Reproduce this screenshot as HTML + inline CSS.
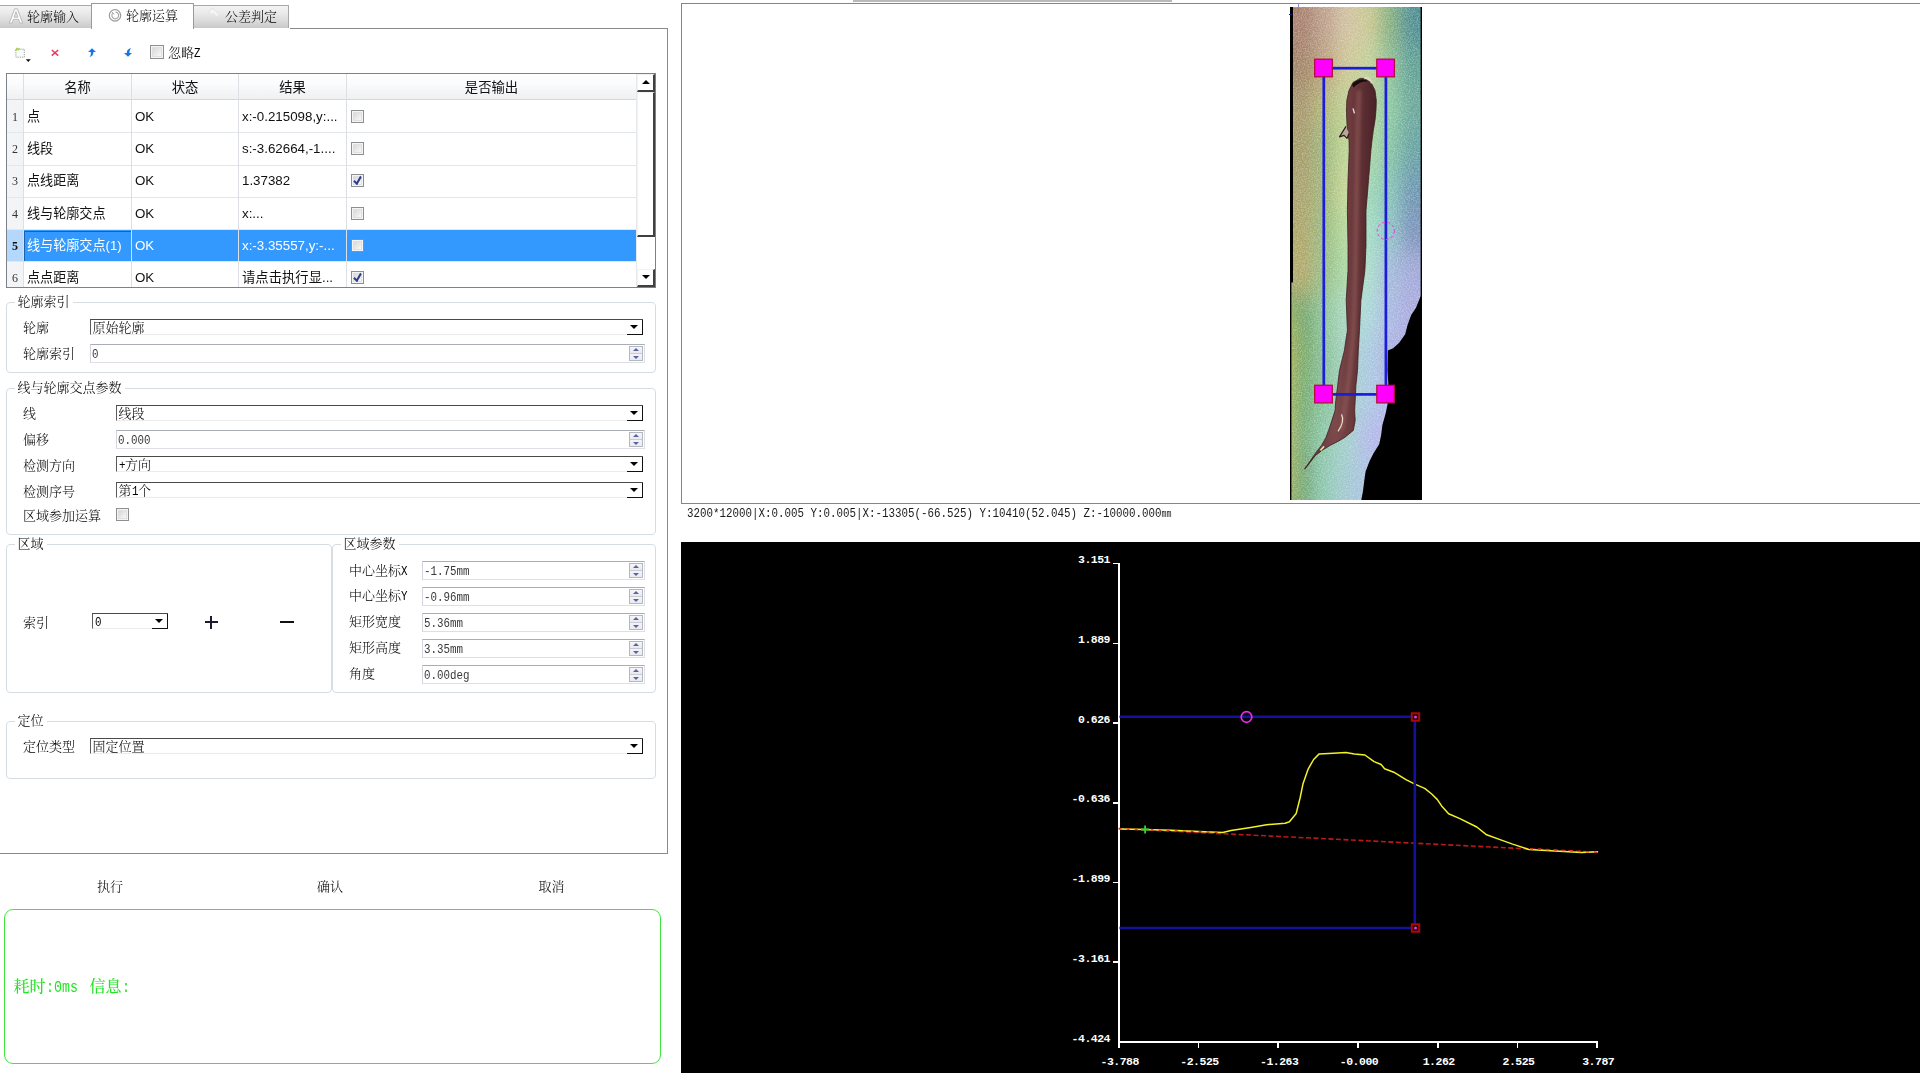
<!DOCTYPE html>
<html lang="zh-CN">
<head>
<meta charset="utf-8">
<title>轮廓运算</title>
<style>
html,body{margin:0;padding:0;}
body{width:1920px;height:1080px;overflow:hidden;background:#fff;position:relative;
 font-family:"Liberation Sans","Noto Sans CJK SC",sans-serif;font-size:13px;color:#000;}
.abs{position:absolute;}
.t{position:absolute;white-space:nowrap;line-height:16px;height:16px;font-size:13px;margin-left:-1px;
 font-family:"Liberation Serif","Noto Serif CJK SC",serif;color:#000;font-weight:300;}
.y{position:absolute;white-space:nowrap;line-height:16px;height:16px;font-size:13.33px;margin-top:1px;
 font-family:"Liberation Sans","Noto Sans CJK SC",sans-serif;color:#111;}
.num{font-family:"Liberation Sans","Noto Sans CJK SC",sans-serif;font-size:12px;color:#333;}
.h{display:inline-block;width:6.5px;font-family:"Liberation Mono",monospace;font-size:13px;transform:scaleX(0.8333);transform-origin:0 50%;}
/* tabs */
.tab{position:absolute;box-sizing:border-box;border:1px solid #a9a9a9;border-bottom:none;
 background:linear-gradient(#f3f3f3 0%,#ebebeb 30%,#dcdcdc 65%,#c9c9c9 100%);border-color:#a8a8a8;}
.tab.act{background:#fff;border-color:#9a9a9a;}
/* groupbox */
.gb{position:absolute;box-sizing:border-box;border:1px solid #d5dde3;border-radius:4px;}
.gbt{position:absolute;background:#fff;padding:0 3px;white-space:nowrap;line-height:16px;height:16px;font-size:13px;
 font-family:"Liberation Serif","Noto Serif CJK SC",serif;color:#000;font-weight:300;}
/* combobox */
.cb{position:absolute;box-sizing:border-box;height:16px;margin-right:1px;background:#fff;
 border-top:1.5px solid #4a4a4a;border-left:1.5px solid #5a5a5a;border-right:0;border-bottom:1px solid #ececec;}
.cb .btn{position:absolute;right:0;top:0;bottom:-1px;width:16.5px;box-sizing:border-box;background:#fff;
 border-right:1.5px solid #111;border-bottom:1.5px solid #111;border-top:0;border-left:0;}
.cb .btn:after{content:"";position:absolute;left:3.6px;top:5.3px;width:0;height:0;border-left:4.2px solid transparent;border-right:4.2px solid transparent;border-top:4.4px solid #000;}
.cb>span{position:absolute;left:1.5px;top:-0.5px;line-height:16px;font-size:13px;white-space:nowrap;
 font-family:"Liberation Serif","Noto Serif CJK SC",serif;color:#000;font-weight:300;}
/* spinbox */
.sp{position:absolute;box-sizing:border-box;height:19px;background:#fff;
 border:1px solid #dcdfe6;border-top-color:#a9adb6;border-left-color:#d2d5dc;}
.sp>span{position:absolute;left:0.5px;top:2px;line-height:16px;white-space:nowrap;transform:scaleX(0.8333);transform-origin:0 0;
 font-family:"Liberation Mono","Noto Sans CJK SC",monospace;font-size:13px;color:#3a3a3a;}
.sp .ud{position:absolute;right:1px;top:1px;width:14px;height:15px;box-sizing:border-box;border:1px solid #b4b8c0;
 background:linear-gradient(#f6f6f8,#e8e9ee 48%,#c9ccd6 50%,#f4f4f8 54%,#e9eaf0);}
.sp .ud:before{content:"";position:absolute;left:3px;top:1px;border:3px solid transparent;border-bottom:3px solid #5a62a0;border-top:0;}
.sp .ud:after{content:"";position:absolute;left:3px;top:9px;border:3px solid transparent;border-top:3px solid #5a62a0;border-bottom:0;}
/* checkbox */
.ck{position:absolute;box-sizing:border-box;width:13px;height:13px;border:1px solid #8e8f8f;background:#f4f4f4;}
.ck:before{content:"";position:absolute;left:1px;top:1px;right:1px;bottom:1px;border:1px solid #e0e0e0;
 background:linear-gradient(135deg,#d8d8d8,#f8f8f8);}
.ck.on:after{content:"";position:absolute;left:3px;top:0px;width:3px;height:7px;border-right:2px solid #2a3a8c;border-bottom:2px solid #2a3a8c;transform:rotate(40deg) skewX(10deg);}
/* table */
.hl{position:absolute;background:#e3e6ea;height:1px;}
.vl{position:absolute;background:#dcdfe4;width:1px;}
</style>
</head>
<body>
<!-- LEFT PANEL -->
<div id="left" style="will-change:transform">
<!-- panel frame -->
<div class="abs" style="left:290px;top:28px;width:378px;height:1px;background:#8a8a8a"></div>
<div class="abs" style="left:667px;top:28px;width:1px;height:826px;background:#8a8a8a"></div>
<div class="abs" style="left:0;top:853px;width:668px;height:1px;background:#8a8a8a"></div>
<!-- tabs -->
<div class="tab" style="left:-1px;top:5px;width:93px;height:23px"></div>
<div class="tab" style="left:193px;top:5px;width:96px;height:23px"></div>
<div class="tab act" style="left:91px;top:3px;width:103px;height:26px"></div>
<div class="t" style="left:28px;top:9px;">轮廓输入</div>
<div class="t" style="left:127px;top:8px;">轮廓运算</div>
<div class="t" style="left:226px;top:9px;">公差判定</div>
<svg class="abs" style="left:8px;top:7px" width="16" height="18" viewBox="0 0 16 18"><path d="M1.3 16.2 L6.6 1.8 L9.4 1.8 L14.7 16.2 L12 16.2 L10.7 12.4 L5.3 12.4 L4 16.2 Z M6.1 10.2 L9.9 10.2 L8 4.6 Z" fill="#fdfdfd" stroke="#b4b4b4" stroke-width="0.9" stroke-linejoin="round"/></svg>
<svg class="abs" style="left:108px;top:8px" width="15" height="15" viewBox="0 0 15 15"><circle cx="7" cy="7.4" r="5.7" fill="none" stroke="#9c9c9c" stroke-width="1.2"/><path d="M4.6 5.4 A3.4 3.4 0 1 0 7.6 4.1" fill="none" stroke="#a4a4a4" stroke-width="1.1"/><path d="M3.6 3.8 L6.3 6.2" stroke="#a4a4a4" stroke-width="1" fill="none"/></svg>
<svg class="abs" style="left:207px;top:7px" width="14" height="12" viewBox="0 0 14 12"><path d="M1.5 4.5 L6 1 L12 7.5 L9.5 10 L6.5 6.5 L4.5 8 Z" fill="#f4f4f4" stroke="#e2e2e2" stroke-width="1" stroke-linejoin="round"/></svg>
<!-- toolbar -->
<svg class="abs" style="left:13px;top:46px" width="20" height="18" viewBox="0 0 20 18">
 <rect x="2.9" y="3.2" width="8.4" height="8" fill="#fbfbfb" stroke="#9c9c9c" stroke-width="1" stroke-dasharray="1.2 1"/>
 <path d="M2.2 4.8 L4 2.3 L5.2 4 L6.6 2.2" fill="none" stroke="#a6d23a" stroke-width="1.3"/>
 <path d="M12.8 13.3 L17.8 13.3 L15.3 15.9 Z" fill="#111"/>
</svg>
<svg class="abs" style="left:50px;top:48px" width="10" height="10" viewBox="0 0 10 10"><path d="M1.8 2 L8.2 7.6 M8.2 2 L1.8 7.6" stroke="#e8395f" stroke-width="1.5" fill="none"/></svg>
<svg class="abs" style="left:87px;top:47px" width="10" height="11" viewBox="0 0 10 11"><path d="M1 5 L5 1.2 L9 5 L6.4 5 C6.4 7.6 5.4 9.3 2.6 9.9 C4 8.6 3.9 7 3.8 5 Z" fill="#1877e6"/></svg>
<svg class="abs" style="left:123px;top:47px" width="10" height="11" viewBox="0 0 10 11"><path d="M1 6 L5 9.8 L9 6 L6.4 6 C6.5 4 6.9 2.4 8.4 1.1 C5 1.7 3.7 3.6 3.8 6 Z" fill="#1877e6"/></svg>
<div class="ck" style="left:150px;top:45px;width:14px;height:14px"></div>
<div class="t" style="left:169px;top:45px;">忽略<span class="h">Z</span></div>
<!-- table -->
<div class="abs" id="tbl" style="left:6px;top:73px;width:650px;height:215px;box-sizing:border-box;border:1px solid #7d8289;background:#fff;overflow:hidden">
<div class="abs" style="left:0;top:0;width:629px;height:25px;background:linear-gradient(#ffffff 0%,#fafbfc 40%,#eef0f2 100%)"></div>
<div class="abs" style="left:0;top:25px;width:629px;height:1px;background:#d4d8dd"></div>
<div class="abs" style="left:0;top:26px;width:16px;height:190px;background:#f3f4f6"></div>
<div class="abs" style="left:16px;top:155.5px;width:613px;height:32px;background:#3399ff"></div>
<div class="abs" style="left:0;top:155.5px;width:16px;height:32px;background:#b4d8fb"></div>
<div class="abs" style="left:17px;top:156.5px;width:106px;height:29px;border:1px solid #1f5fae;box-sizing:content-box"></div>
<div class="hl" style="left:0;top:58.30000000000001px;width:629px"></div>
<div class="hl" style="left:0;top:90.5px;width:629px"></div>
<div class="hl" style="left:0;top:122.80000000000001px;width:629px"></div>
<div class="hl" style="left:0;top:155px;width:629px"></div>
<div class="hl" style="left:0;top:187px;width:629px"></div>
<div class="vl" style="left:16px;top:0;height:215px"></div>
<div class="vl" style="left:124px;top:0;height:215px"></div>
<div class="vl" style="left:231px;top:0;height:215px"></div>
<div class="vl" style="left:339px;top:0;height:215px"></div>
<div class="vl" style="left:629px;top:0;height:215px;background:#e6e8ec"></div>
<div class="y" style="left:20.5px;width:100px;text-align:center;top:5px">名称</div>
<div class="y" style="left:128px;width:100px;text-align:center;top:5px">状态</div>
<div class="y" style="left:235.5px;width:100px;text-align:center;top:5px">结果</div>
<div class="y" style="left:434.5px;width:100px;text-align:center;top:5px">是否输出</div>
<div class="abs" style="left:0;width:16px;text-align:center;top:35.0px;line-height:16px;font-size:12px;font-family:'Liberation Serif',serif;color:#333;">1</div>
<div class="y" style="left:20px;top:34.0px;color:#111;font-size:13.1px">点</div>
<div class="y" style="left:128px;top:34.0px;color:#111">OK</div>
<div class="y" style="left:235px;top:34.0px;color:#111;">x:-0.215098,y:...</div>
<div class="ck" style="left:343.5px;top:36.0px"></div>
<div class="abs" style="left:0;width:16px;text-align:center;top:67.0px;line-height:16px;font-size:12px;font-family:'Liberation Serif',serif;color:#333;">2</div>
<div class="y" style="left:20px;top:66.0px;color:#111;font-size:13.1px">线段</div>
<div class="y" style="left:128px;top:66.0px;color:#111">OK</div>
<div class="y" style="left:235px;top:66.0px;color:#111;">s:-3.62664,-1....</div>
<div class="ck" style="left:343.5px;top:68.0px"></div>
<div class="abs" style="left:0;width:16px;text-align:center;top:99.0px;line-height:16px;font-size:12px;font-family:'Liberation Serif',serif;color:#333;">3</div>
<div class="y" style="left:20px;top:98.0px;color:#111;font-size:13.1px">点线距离</div>
<div class="y" style="left:128px;top:98.0px;color:#111">OK</div>
<div class="y" style="left:235px;top:98.0px;color:#111;">1.37382</div>
<div class="ck on" style="left:343.5px;top:100.0px"></div>
<div class="abs" style="left:0;width:16px;text-align:center;top:131.5px;line-height:16px;font-size:12px;font-family:'Liberation Serif',serif;color:#333;">4</div>
<div class="y" style="left:20px;top:130.5px;color:#111;font-size:13.1px">线与轮廓交点</div>
<div class="y" style="left:128px;top:130.5px;color:#111">OK</div>
<div class="y" style="left:235px;top:130.5px;color:#111;">x:...</div>
<div class="ck" style="left:343.5px;top:132.5px"></div>
<div class="abs" style="left:0;width:16px;text-align:center;top:163.5px;line-height:16px;font-size:12px;font-family:'Liberation Serif',serif;font-weight:bold;color:#111;">5</div>
<div class="y" style="left:20px;top:162.5px;color:#fff;font-size:13.1px">线与轮廓交点(1)</div>
<div class="y" style="left:128px;top:162.5px;color:#fff">OK</div>
<div class="y" style="left:235px;top:162.5px;color:#fff;">x:-3.35557,y:-...</div>
<div class="ck" style="left:343.5px;top:164.5px"></div>
<div class="abs" style="left:0;width:16px;text-align:center;top:196.0px;line-height:16px;font-size:12px;font-family:'Liberation Serif',serif;color:#333;">6</div>
<div class="y" style="left:20px;top:195.0px;color:#111;font-size:13.1px">点点距离</div>
<div class="y" style="left:128px;top:195.0px;color:#111">OK</div>
<div class="y" style="left:235px;top:195.0px;color:#111;">请点击执行显...</div>
<div class="ck on" style="left:343.5px;top:197.0px"></div>
<div class="abs" style="left:630px;top:0;width:18px;height:213px;background:#fff"></div>
<div class="abs" style="left:630px;top:0px;width:18px;height:18px;box-sizing:border-box;background:#fff;border-right:2px solid #404040;border-bottom:2px solid #404040;border-left:1px solid #f2f2f2;border-top:1px solid #f2f2f2"></div>
<div class="abs" style="left:630px;top:18px;width:18px;height:145px;box-sizing:border-box;background:#fff;border-right:2px solid #404040;border-bottom:2px solid #404040;border-left:1px solid #f2f2f2;border-top:1px solid #f2f2f2"></div>
<div class="abs" style="left:630px;top:195px;width:18px;height:18px;box-sizing:border-box;background:#fff;border-right:2px solid #404040;border-bottom:2px solid #404040;border-left:1px solid #f2f2f2;border-top:1px solid #f2f2f2"></div>
<div class="abs" style="left:635px;top:6px;width:0;height:0;border-left:4px solid transparent;border-right:4px solid transparent;border-bottom:4.3px solid #000"></div>
<div class="abs" style="left:635px;top:201px;width:0;height:0;border-left:4px solid transparent;border-right:4px solid transparent;border-top:4.3px solid #000"></div>
</div>
<!-- group: 轮廓索引 -->
<div class="gb" style="left:6px;top:302px;width:650px;height:71px"></div>
<div class="gbt" style="left:14.5px;top:294px">轮廓索引</div>
<div class="t" style="left:24px;top:320px">轮廓</div>
<div class="cb" style="left:90px;top:319px;width:553px"><span>原始轮廓</span><div class="btn"></div></div>
<div class="t" style="left:24px;top:345.5px">轮廓索引</div>
<div class="sp" style="left:90px;top:344px;width:555px"><span>0</span><div class="ud"></div></div>
<!-- group: 线与轮廓交点参数 -->
<div class="gb" style="left:6px;top:388px;width:650px;height:147px"></div>
<div class="gbt" style="left:14.5px;top:380px">线与轮廓交点参数</div>
<div class="t" style="left:24px;top:405.7px">线</div>
<div class="cb" style="left:116px;top:405px;width:527px"><span>线段</span><div class="btn"></div></div>
<div class="t" style="left:24px;top:431.5px">偏移</div>
<div class="sp" style="left:116px;top:430px;width:529px"><span>0.000</span><div class="ud"></div></div>
<div class="t" style="left:24px;top:457.5px">检测方向</div>
<div class="cb" style="left:116px;top:456px;width:527px"><span><span class="h">+</span>方向</span><div class="btn"></div></div>
<div class="t" style="left:24px;top:483.5px">检测序号</div>
<div class="cb" style="left:116px;top:482px;width:527px"><span>第<span class="h">1</span>个</span><div class="btn"></div></div>
<div class="t" style="left:24px;top:507.5px">区域参加运算</div>
<div class="ck" style="left:116px;top:507.5px"></div>
<!-- group: 区域 -->
<div class="gb" style="left:6px;top:544px;width:326px;height:149px"></div>
<div class="gbt" style="left:14.5px;top:536px">区域</div>
<div class="t" style="left:24px;top:614.5px">索引</div>
<div class="cb" style="left:92px;top:613px;width:76px"><span><span class="h">0</span></span><div class="btn"></div></div>
<div class="abs" style="left:205px;top:621.3px;width:13px;height:1.8px;background:#1a1a30"></div><div class="abs" style="left:210.4px;top:615.8px;width:1.8px;height:12.8px;background:#1a1a30"></div>
<div class="abs" style="left:279.5px;top:621.2px;width:14px;height:1.8px;background:#111"></div>
<!-- group: 区域参数 -->
<div class="gb" style="left:332px;top:544px;width:324px;height:149px"></div>
<div class="gbt" style="left:340.5px;top:536px">区域参数</div>
<div class="t" style="left:350px;top:562.6px">中心坐标<span class="h">X</span></div>
<div class="sp" style="left:422px;top:561px;width:223px"><span>-1.75mm</span><div class="ud"></div></div>
<div class="t" style="left:350px;top:588.3px">中心坐标<span class="h">Y</span></div>
<div class="sp" style="left:422px;top:587px;width:223px"><span>-0.96mm</span><div class="ud"></div></div>
<div class="t" style="left:350px;top:614px">矩形宽度</div>
<div class="sp" style="left:422px;top:612.5px;width:223px"><span>5.36mm</span><div class="ud"></div></div>
<div class="t" style="left:350px;top:640px">矩形高度</div>
<div class="sp" style="left:422px;top:638.5px;width:223px"><span>3.35mm</span><div class="ud"></div></div>
<div class="t" style="left:350px;top:665.8px">角度</div>
<div class="sp" style="left:422px;top:664.5px;width:223px"><span>0.00deg</span><div class="ud"></div></div>
<!-- group: 定位 -->
<div class="gb" style="left:6px;top:720.5px;width:650px;height:58.5px"></div>
<div class="gbt" style="left:14.5px;top:712.5px">定位</div>
<div class="t" style="left:24px;top:738.8px">定位类型</div>
<div class="cb" style="left:90px;top:738px;width:553px"><span>固定位置</span><div class="btn"></div></div>
<!-- buttons -->
<div class="t" style="left:71px;width:80px;text-align:center;top:878.8px">执行</div>
<div class="t" style="left:291px;width:80px;text-align:center;top:878.8px">确认</div>
<div class="t" style="left:512.5px;width:80px;text-align:center;top:878.8px">取消</div>
<!-- message box -->
<div class="abs" style="left:4px;top:909px;width:657px;height:155px;box-sizing:border-box;border:1.5px solid #3fe63f;border-radius:9px"></div>
<div class="abs" id="msg" style="left:13.5px;top:977.5px;line-height:20px;font-size:16px;color:#24e424;white-space:pre;font-family:'Liberation Mono','Noto Serif CJK SC',monospace;font-weight:500">耗时<span style="display:inline-block;width:32px;font-size:16px;transform:scaleX(0.8333);transform-origin:0 50%">:0ms</span></div><div class="abs" id="msg2" style="left:89.5px;top:977.5px;line-height:20px;font-size:16px;color:#24e424;white-space:pre;font-family:'Liberation Mono','Noto Serif CJK SC',monospace;font-weight:500">信息<span style="display:inline-block;width:8px;font-size:16px;transform:scaleX(0.8333);transform-origin:0 50%">:</span></div>
</div>
<!-- RIGHT: viewer frame -->
<div class="abs" style="left:853px;top:0;width:319px;height:2px;background:#b9b9b9;filter:blur(0.6px)"></div>
<div class="abs" id="viewer" style="left:681px;top:3px;width:1245px;height:501px;box-sizing:border-box;border:1px solid #858585;background:#fff"></div>
<!--IMG-->
<svg class="abs" id="scan" style="left:1290px;top:6.6px" width="132" height="493.4" viewBox="1290 6.6 132 493.4">
<defs>
<filter id="bl" x="-20%" y="-10%" width="140%" height="120%"><feGaussianBlur stdDeviation="7.5 14"/></filter>
<filter id="bl3" x="-50%" y="-10%" width="200%" height="120%"><feGaussianBlur stdDeviation="1.5"/></filter>
<filter id="bl2" x="-30%" y="-30%" width="160%" height="160%"><feGaussianBlur stdDeviation="0.7"/></filter>
<filter id="noise" x="0" y="0" width="100%" height="100%"><feTurbulence type="fractalNoise" baseFrequency="0.75" numOctaves="2" seed="3" result="n"/><feColorMatrix type="matrix" values="0 0 0 0 1  0 0 0 0 1  0 0 0 0 1  1.6 0 0 0 -0.55"/></filter>
<clipPath id="cp"><rect x="1290" y="6.6" width="132" height="493.4"/></clipPath>
<linearGradient id="brn" x1="0" x2="1" y1="0" y2="0"><stop offset="0" stop-color="#4e262c"/><stop offset="0.18" stop-color="#6a3a3e"/><stop offset="0.42" stop-color="#7c4a4c"/><stop offset="0.7" stop-color="#683639"/><stop offset="1" stop-color="#4a2228"/></linearGradient>
</defs>
<g clip-path="url(#cp)">
<rect x="1290" y="6.6" width="132" height="493.4" fill="#9cc0a0"/>
<g filter="url(#bl)">
<rect x="1262.8" y="-34.1" width="52.5" height="82.2" fill="#a67e6c"/>
<rect x="1313.8" y="-34.1" width="22.5" height="82.2" fill="#bc9e88"/>
<rect x="1335.8" y="-34.1" width="22.5" height="82.2" fill="#d0c0a0"/>
<rect x="1356.8" y="-34.1" width="22.5" height="82.2" fill="#c8c690"/>
<rect x="1378.8" y="-34.1" width="22.5" height="82.2" fill="#84b07c"/>
<rect x="1399.8" y="-34.1" width="52.5" height="82.2" fill="#4c8c90"/>
<rect x="1262.8" y="46.9" width="52.5" height="42.2" fill="#a08264"/>
<rect x="1313.8" y="46.9" width="22.5" height="42.2" fill="#b8a07c"/>
<rect x="1335.8" y="46.9" width="22.5" height="42.2" fill="#ccc490"/>
<rect x="1356.8" y="46.9" width="22.5" height="42.2" fill="#c0d098"/>
<rect x="1378.8" y="46.9" width="22.5" height="42.2" fill="#8cc094"/>
<rect x="1399.8" y="46.9" width="52.5" height="42.2" fill="#5ea094"/>
<rect x="1262.8" y="87.9" width="52.5" height="42.2" fill="#a6966a"/>
<rect x="1313.8" y="87.9" width="22.5" height="42.2" fill="#b0b674"/>
<rect x="1335.8" y="87.9" width="22.5" height="42.2" fill="#bcd090"/>
<rect x="1356.8" y="87.9" width="22.5" height="42.2" fill="#b0d09a"/>
<rect x="1378.8" y="87.9" width="22.5" height="42.2" fill="#8ccaa0"/>
<rect x="1399.8" y="87.9" width="52.5" height="42.2" fill="#68a698"/>
<rect x="1262.8" y="128.9" width="52.5" height="42.2" fill="#a49a68"/>
<rect x="1313.8" y="128.9" width="22.5" height="42.2" fill="#98b678"/>
<rect x="1335.8" y="128.9" width="22.5" height="42.2" fill="#bcd490"/>
<rect x="1356.8" y="128.9" width="22.5" height="42.2" fill="#a8d4a0"/>
<rect x="1378.8" y="128.9" width="22.5" height="42.2" fill="#84c2a2"/>
<rect x="1399.8" y="128.9" width="52.5" height="42.2" fill="#64a0a0"/>
<rect x="1262.8" y="169.9" width="52.5" height="42.2" fill="#a8a06a"/>
<rect x="1313.8" y="169.9" width="22.5" height="42.2" fill="#9eb678"/>
<rect x="1335.8" y="169.9" width="22.5" height="42.2" fill="#c8d894"/>
<rect x="1356.8" y="169.9" width="22.5" height="42.2" fill="#98d4b2"/>
<rect x="1378.8" y="169.9" width="22.5" height="42.2" fill="#84c2b4"/>
<rect x="1399.8" y="169.9" width="52.5" height="42.2" fill="#6a94b0"/>
<rect x="1262.8" y="210.9" width="52.5" height="42.2" fill="#aaa466"/>
<rect x="1313.8" y="210.9" width="22.5" height="42.2" fill="#96ba7e"/>
<rect x="1335.8" y="210.9" width="22.5" height="42.2" fill="#b2d898"/>
<rect x="1356.8" y="210.9" width="22.5" height="42.2" fill="#a0dcc2"/>
<rect x="1378.8" y="210.9" width="22.5" height="42.2" fill="#8cc2c4"/>
<rect x="1399.8" y="210.9" width="52.5" height="42.2" fill="#7890ba"/>
<rect x="1262.8" y="251.9" width="52.5" height="42.2" fill="#b0a868"/>
<rect x="1313.8" y="251.9" width="22.5" height="42.2" fill="#94bc84"/>
<rect x="1335.8" y="251.9" width="22.5" height="42.2" fill="#a8d8a0"/>
<rect x="1356.8" y="251.9" width="22.5" height="42.2" fill="#a8dcc8"/>
<rect x="1378.8" y="251.9" width="22.5" height="42.2" fill="#a0b8d8"/>
<rect x="1399.8" y="251.9" width="52.5" height="42.2" fill="#a0a8d8"/>
<rect x="1262.8" y="292.9" width="52.5" height="42.2" fill="#6ea468"/>
<rect x="1313.8" y="292.9" width="22.5" height="42.2" fill="#8cc498"/>
<rect x="1335.8" y="292.9" width="22.5" height="42.2" fill="#a8d8c0"/>
<rect x="1356.8" y="292.9" width="22.5" height="42.2" fill="#a8d8d8"/>
<rect x="1378.8" y="292.9" width="22.5" height="42.2" fill="#a8b8e0"/>
<rect x="1399.8" y="292.9" width="52.5" height="42.2" fill="#a8a8e0"/>
<rect x="1262.8" y="333.9" width="52.5" height="42.2" fill="#74a664"/>
<rect x="1313.8" y="333.9" width="22.5" height="42.2" fill="#88c094"/>
<rect x="1335.8" y="333.9" width="22.5" height="42.2" fill="#a0d0c0"/>
<rect x="1356.8" y="333.9" width="22.5" height="42.2" fill="#a8c8e0"/>
<rect x="1378.8" y="333.9" width="22.5" height="42.2" fill="#a8b0e0"/>
<rect x="1399.8" y="333.9" width="52.5" height="42.2" fill="#a8a8e0"/>
<rect x="1262.8" y="374.9" width="52.5" height="42.2" fill="#72aa6c"/>
<rect x="1313.8" y="374.9" width="22.5" height="42.2" fill="#84c098"/>
<rect x="1335.8" y="374.9" width="22.5" height="42.2" fill="#a0d0c0"/>
<rect x="1356.8" y="374.9" width="22.5" height="42.2" fill="#a8c8e0"/>
<rect x="1378.8" y="374.9" width="22.5" height="42.2" fill="#b0b8e8"/>
<rect x="1399.8" y="374.9" width="52.5" height="42.2" fill="#a8a8e0"/>
<rect x="1262.8" y="415.9" width="52.5" height="42.2" fill="#72aa74"/>
<rect x="1313.8" y="415.9" width="22.5" height="42.2" fill="#8cc8a8"/>
<rect x="1335.8" y="415.9" width="22.5" height="42.2" fill="#a0d0c8"/>
<rect x="1356.8" y="415.9" width="22.5" height="42.2" fill="#b0b8e8"/>
<rect x="1378.8" y="415.9" width="22.5" height="42.2" fill="#b0b0e8"/>
<rect x="1399.8" y="415.9" width="52.5" height="42.2" fill="#a8a8e0"/>
<rect x="1262.8" y="456.9" width="52.5" height="82.2" fill="#6ea670"/>
<rect x="1313.8" y="456.9" width="22.5" height="82.2" fill="#8cc8b0"/>
<rect x="1335.8" y="456.9" width="22.5" height="82.2" fill="#a0c8d0"/>
<rect x="1356.8" y="456.9" width="22.5" height="82.2" fill="#a8c0e0"/>
<rect x="1378.8" y="456.9" width="22.5" height="82.2" fill="#b0b0e8"/>
<rect x="1399.8" y="456.9" width="52.5" height="82.2" fill="#a8a8e0"/>
<rect x="1284" y="310" width="8" height="200" fill="#c4bc4c"/>
</g>
<rect x="1290" y="6.6" width="132" height="493.4" filter="url(#noise)" opacity="0.42"/>
<path d="M1360.0 78.0 L1353.0 82.0 L1349.0 90.0 L1346.8 100.0 L1346.5 110.0 L1346.8 120.0 L1347.4 130.0 L1349.0 140.0 L1349.2 150.0 L1348.0 180.0 L1347.4 210.0 L1348.0 245.0 L1348.0 270.0 L1346.2 300.0 L1347.4 330.0 L1344.4 350.0 L1339.5 370.0 L1337.7 385.0 L1335.8 400.0 L1335.1 410.0 L1331.9 420.0 L1328.6 430.0 L1326.0 437.0 L1321.5 445.0 L1317.5 450.0 L1314.0 455.0 L1304.6 468.5 L1305.0 468.5 L1315.5 455.0 L1322.0 450.0 L1330.0 445.0 L1338.0 441.0 L1344.8 437.0 L1353.3 430.0 L1355.2 420.0 L1354.6 410.0 L1355.2 400.0 L1355.9 385.0 L1357.5 370.0 L1358.3 350.0 L1359.5 330.0 L1360.9 300.0 L1364.9 270.0 L1366.0 245.0 L1366.0 210.0 L1368.5 180.0 L1370.9 150.0 L1372.0 140.0 L1373.3 130.0 L1375.0 120.0 L1376.0 110.0 L1376.3 100.0 L1375.0 90.0 L1371.0 82.0 L1364.0 78.0 Z" fill="url(#brn)" stroke="#3c1c22" stroke-width="0.8" stroke-linejoin="round" filter="url(#bl2)"/>
<path d="M1359 92 C1356 160 1357 250 1353.5 330 C1351 370 1346 400 1342 428" stroke="#94605e" stroke-width="5" fill="none" opacity="0.5" filter="url(#bl3)" stroke-linecap="round"/>
<path d="M1352 84 Q1358 77.5 1366 79.5 L1368 81 Q1360 80.5 1353.5 87 Z" fill="#120a0c" filter="url(#bl2)"/>
<path d="M1364 78 Q1369 76 1372 83" stroke="#e4e0c4" stroke-width="2" fill="none" opacity="0.8" filter="url(#bl2)"/>
<path d="M1353 108 L1354.5 113" stroke="#e6d6d0" stroke-width="1.4" fill="none"/>
<path d="M1346 126 L1339.5 136.5 L1344 135 L1347 138 L1349 133" stroke="#2a1a18" stroke-width="1.2" fill="#b8a898" stroke-linejoin="round"/>
<path d="M1341.5 414 Q1345 421 1338 431" stroke="#f0dcc8" stroke-width="1.2" fill="none"/>
<path d="M1324 446 L1320.5 450" stroke="#e4e090" stroke-width="1.6" fill="none"/>
<path d="M1423.0 293.0 L1420.3 296.6 L1416.0 307.4 L1411.2 314.6 L1407.6 324.3 L1405.2 333.9 L1399.2 342.3 L1393.2 347.8 L1387.8 350.2 L1387.5 370.0 L1388.3 383.0 L1387.6 403.7 L1385.7 412.8 L1382.4 424.5 L1381.1 434.8 L1379.2 443.9 L1373.4 453.0 L1369.5 460.8 L1365.6 471.1 L1364.3 480.2 L1363.0 490.6 L1361.0 501.0 L1423.0 501.0 Z" fill="#000"/>
<rect x="1290" y="6" width="3" height="276" fill="#000"/><rect x="1290" y="280" width="1.4" height="221" fill="#000"/><rect x="1420.6" y="6" width="1.6" height="495" fill="#000"/>
</g>
<rect x="1323.8" y="67.8" width="62.1" height="326.2" fill="none" stroke="#1c1cdc" stroke-width="2.7"/>
<circle cx="1385.8" cy="230.5" r="8.6" fill="none" stroke="#e63ce6" stroke-width="1" stroke-dasharray="3 2.2"/>
<rect x="1314.7" y="58.8" width="17.6" height="17.6" fill="#ff00ff" stroke="#b0103c" stroke-width="1.3"/>
<rect x="1314.7" y="384.9" width="17.6" height="17.6" fill="#ff00ff" stroke="#b0103c" stroke-width="1.3"/>
<rect x="1376.8" y="58.8" width="17.6" height="17.6" fill="#ff00ff" stroke="#b0103c" stroke-width="1.3"/>
<rect x="1376.8" y="384.9" width="17.6" height="17.6" fill="#ff00ff" stroke="#b0103c" stroke-width="1.3"/>
</svg>
<div class="abs" style="left:1289px;top:14px;width:2.6px;height:1.3px;background:#1414a4"></div><div class="abs" style="left:1297.8px;top:4.4px;width:1.2px;height:2.2px;background:#8c8ce6"></div>
<!--/IMG-->
<!-- status line -->
<div class="abs" id="status" style="left:687.3px;top:506px;line-height:16px;font-size:13px;color:#1a1a1a;white-space:pre;transform:scaleX(0.8333);transform-origin:0 0;font-family:'Liberation Mono','Noto Sans CJK SC',monospace">3200*12000|X:0.005 Y:0.005|X:-13305(-66.525) Y:10410(52.045) Z:-10000.000<span style="font-size:10px">mm</span></div>
<!-- chart -->
<svg class="abs" id="chart" style="left:681px;top:542px" width="1239" height="531" viewBox="681 542 1239 531">
<rect x="681" y="542" width="1239" height="531" fill="#000"/>
<g stroke="#fff" stroke-width="1.6" fill="none" shape-rendering="crispEdges">
<path d="M1118.7 563 V1042 H1598"/>
<path d="M1112.5 563.6 H1118.7"/>
<path d="M1112.5 643.3 H1118.7"/>
<path d="M1112.5 723.0 H1118.7"/>
<path d="M1112.5 802.7 H1118.7"/>
<path d="M1112.5 882.4 H1118.7"/>
<path d="M1112.5 962.1 H1118.7"/>
<path d="M1118.7 1042 V1047.5"/>
<path d="M1198.5 1042 V1047.5"/>
<path d="M1278.2 1042 V1047.5"/>
<path d="M1358.0 1042 V1047.5"/>
<path d="M1437.7 1042 V1047.5"/>
<path d="M1517.5 1042 V1047.5"/>
<path d="M1597.2 1042 V1047.5"/>
</g>
<g fill="#fff" font-family="'Liberation Mono',monospace" font-size="11.5" font-weight="bold" letter-spacing="-0.5">
<text x="1110" y="563.3" text-anchor="end">3.151</text>
<text x="1110" y="643.0" text-anchor="end">1.889</text>
<text x="1110" y="722.7" text-anchor="end">0.626</text>
<text x="1110" y="802.4" text-anchor="end">-0.636</text>
<text x="1110" y="882.1" text-anchor="end">-1.899</text>
<text x="1110" y="961.8" text-anchor="end">-3.161</text>
<text x="1110" y="1041.5" text-anchor="end">-4.424</text>
<text x="1119.7" y="1064.5" text-anchor="middle">-3.788</text>
<text x="1199.5" y="1064.5" text-anchor="middle">-2.525</text>
<text x="1279.2" y="1064.5" text-anchor="middle">-1.263</text>
<text x="1359.0" y="1064.5" text-anchor="middle">-0.000</text>
<text x="1438.7" y="1064.5" text-anchor="middle">1.262</text>
<text x="1518.5" y="1064.5" text-anchor="middle">2.525</text>
<text x="1598.2" y="1064.5" text-anchor="middle">3.787</text>
</g>
<path d="M1118.7 828.5 L1598 852.3" stroke="#b81a1a" stroke-width="1.6" stroke-dasharray="5 2.5" fill="none"/>
<path d="M1119.0 829.0 L1145.1 829.5 L1171.7 830.3 L1198.8 831.6 L1222.7 832.6 L1231.0 830.5 L1250.8 827.4 L1266.5 824.8 L1285.2 823.2 L1289.4 821.7 L1296.2 813.4 L1300.2 797.5 L1303.1 783.4 L1308.0 769.4 L1313.6 759.5 L1319.2 753.9 L1333.3 753.2 L1345.9 752.5 L1354.4 753.9 L1364.9 755.0 L1374.1 761.6 L1381.1 764.5 L1384.6 768.7 L1393.8 772.2 L1406.4 779.9 L1414.9 784.1 L1424.7 788.4 L1431.7 794.0 L1437.4 799.6 L1441.6 805.9 L1448.6 813.7 L1459.9 818.6 L1476.8 827.0 L1486.6 834.8 L1502.1 840.4 L1511.9 843.9 L1528.8 849.5 L1559.4 851.2 L1581.4 852.6 L1598.1 851.8" stroke="#f2f228" stroke-width="1.5" fill="none" stroke-linejoin="round"/>
<path d="M1118.7 828.8 L1222 832.6" stroke="#d83a1e" stroke-width="1.5" stroke-dasharray="3 5" fill="none"/>
<path d="M1530 848.8 L1598 852.3" stroke="#d83a1e" stroke-width="1.5" stroke-dasharray="3 5" fill="none"/>
<path d="M1119.5 716.8 H1414.8 V928 H1119.5" stroke="#12129e" stroke-width="2.6" fill="none"/>
<rect x="1411.8" y="713.3" width="7.4" height="7.4" fill="#160004" stroke="#b00606" stroke-width="2"/><circle cx="1415.5" cy="717.0" r="1.5" fill="#d040f0"/>
<rect x="1411.8" y="924.3" width="7.4" height="7.4" fill="#160004" stroke="#b00606" stroke-width="2"/><circle cx="1415.5" cy="928.0" r="1.5" fill="#d040f0"/>
<circle cx="1246.5" cy="717" r="5.3" fill="none" stroke="#f028f0" stroke-width="1.7"/>
<path d="M1141 829.5 H1149.2 M1145.1 825.4 V833.6" stroke="#2fd62f" stroke-width="1.8" fill="none"/>
</svg>
</body>
</html>
